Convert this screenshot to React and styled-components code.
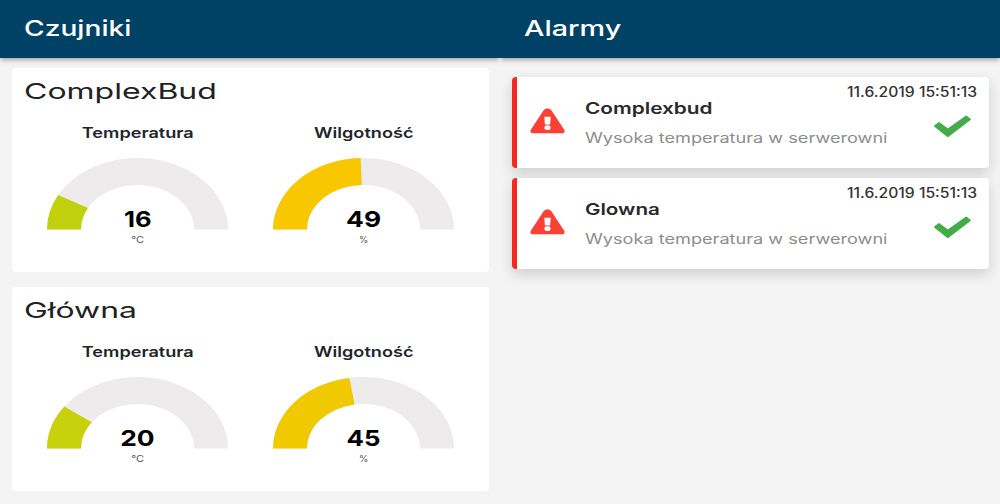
import React from "react";
import styled, { createGlobalStyle } from "styled-components";

const GlobalStyle = createGlobalStyle`
  *, *::before, *::after { box-sizing: border-box; }
  body { margin: 0; background: #f4f4f4; }
`;

const Page = styled.main`
  display: grid;
  grid-template-columns: 1fr 1fr;
  width: 1000px;
  height: 504px;
  overflow: hidden;
  background: #f4f4f4;
  font-family: Inter, "Open Sans", sans-serif;
`;

const Column = styled.section`
  display: flex;
  flex-direction: column;
  min-width: 0;
  overflow: hidden;
`;

const Header = styled.header`
  flex: none;
  height: 58px;
  padding: 14px 24px 0;
  background: #004266;
  color: #fff;
  box-shadow: 0 3px 4px -1px rgba(0, 0, 0, 0.25), 0 2px 8px rgba(0, 0, 0, 0.1);
`;

const Wide = styled.span`
  display: block;
  width: max-content;
  white-space: nowrap;
  transform: scaleX(${(p) => p.$stretch || 1});
  transform-origin: ${(p) => p.$origin || "left"} center;
`;

const HeaderTitle = styled.h1`
  margin: 0;
  font-size: 21.5px;
  line-height: 28px;
  font-weight: 500;
`;

const SensorList = styled.div`
  display: flex;
  flex-direction: column;
  gap: 15px;
  padding: 10px 11px 0 12px;
`;

const SensorCard = styled.article`
  height: 204px;
  padding: 9px 12px 0;
  border-radius: 4px;
  background: #fff;
`;

const SensorName = styled.h2`
  margin: 0;
  font-size: 22px;
  line-height: 28px;
  font-weight: 400;
  color: #222;
`;

const Meters = styled.div`
  display: grid;
  grid-template-columns: 226px 226px;
  margin-top: 18px;
`;

const Meter = styled.div`
  display: flex;
  flex-direction: column;
  align-items: center;
`;

const MeterLabel = styled.div`
  padding-left: 1.5px;
  font-size: 14.5px;
  line-height: 20px;
  font-weight: 600;
  color: #20252a;
`;

const Dial = styled.div`
  display: grid;
  width: 181px;
  height: 100px;
  margin-top: 15px;

  > * { grid-area: 1 / 1; }
`;

const Reading = styled.div`
  display: flex;
  flex-direction: column;
  align-items: center;
  padding: 47px 0 0 1.5px;
`;

const Value = styled.div`
  font-size: 22px;
  line-height: 28px;
  font-weight: 700;
  color: #000;
`;

const Unit = styled.div`
  margin-top: 1px;
  font-size: 9.5px;
  line-height: 12px;
  color: #555;
`;

const AlarmList = styled.div`
  display: flex;
  flex-direction: column;
  gap: 10px;
  padding: 19px 11px 0 12px;
`;

const AlarmCard = styled.article`
  display: grid;
  grid-template-columns: 55px 1fr auto;
  height: 91px;
  padding: 0 12px 0 18px;
  border-radius: 4px;
  background: linear-gradient(to right, #f4291f 5px, #fff 5px);
  box-shadow: 0 5px 14px rgba(0, 0, 0, 0.16);
`;

const WarningSvg = styled.svg`
  margin-top: 31px;
`;

const AlarmText = styled.div`
  padding-top: 20px;
`;

const AlarmTitle = styled.h3`
  margin: 0;
  font-size: 16px;
  line-height: 22px;
  font-weight: 600;
  color: #2a2a2a;
`;

const AlarmMessage = styled.p`
  margin: 9px 0 0;
  font-size: 14px;
  line-height: 20px;
  color: #8d8d8d;
`;

const AlarmSide = styled.div`
  display: flex;
  flex-direction: column;
  align-items: flex-end;
  padding-top: 5px;
`;

const AlarmTime = styled.time`
  font-size: 14px;
  line-height: 20px;
  font-weight: 500;
  color: #333;
`;

const CheckSvg = styled.svg`
  margin: 13px 6px 0 0;
`;

function WarningIcon() {
  return (
    <WarningSvg width="35" height="26" viewBox="0 0 35 26">
      <path
        d="M17.5 0.5C19.3 0.5 20.5 1.2 21.2 2.1L34.2 21.8C35.3 23.6 34.1 25.2 32 25.2H3C0.9 25.2 -0.3 23.6 0.8 21.8L13.8 2.1C14.5 1.2 15.7 0.5 17.5 0.5Z"
        fill="#f94135"
      />
      <path d="M14.3 8.8H20.7L20.1 16.6H14.9Z" fill="#fff" />
      <ellipse cx="17.5" cy="19.7" rx="3.1" ry="2.4" fill="#fff" />
    </WarningSvg>
  );
}

function CheckIcon() {
  return (
    <CheckSvg width="37" height="23" viewBox="0 0 37 23">
      <path
        d="M0.9 11L5 7.9L13.8 14.4L32.2 1.3L36.1 4.3L13.8 21.3Z"
        fill="#43ac48"
        stroke="#43ac48"
        strokeWidth="1.6"
        strokeLinejoin="round"
      />
    </CheckSvg>
  );
}

const CX = 90.5;
const CY = 71.5;

function arcPath(fraction) {
  const a = Math.PI * (1 - fraction);
  const c = Math.cos(a);
  const s = Math.sin(a);
  const [rx, ry, ix, iy] = [90.5, 71.5, 56.5, 44.5];
  return `M0 ${CY} A${rx} ${ry} 0 0 1 ${CX + rx * c} ${CY - ry * s} L${CX + ix * c} ${CY - iy * s} A${ix} ${iy} 0 0 0 ${CX - ix} ${CY} Z`;
}

function Gauge({ label, labelStretch, value, valueStretch, unit, color }) {
  return (
    <Meter>
      <MeterLabel><Wide $origin="center" $stretch={labelStretch}>{label}</Wide></MeterLabel>
      <Dial>
        <svg width="181" height="72" viewBox="0 0 181 72">
          <path d={arcPath(1)} fill="#edebec" />
          <path d={arcPath(value / 100)} fill={color} />
        </svg>
        <Reading>
          <Value><Wide $origin="center" $stretch={valueStretch}>{value}</Wide></Value>
          <Unit><Wide $origin="center" $stretch={unit === "%" ? 1 : 1.15}>{unit}</Wide></Unit>
        </Reading>
      </Dial>
    </Meter>
  );
}

const sensors = [
  { name: "ComplexBud", stretch: 1.455, temp: 16, tempStretch: 1.16, tempColor: "#c1d10e", hum: 49, humStretch: 1.2, humColor: "#f8c700" },
  { name: "Główna", stretch: 1.45, temp: 20, tempStretch: 1.2, tempColor: "#c9d10c", hum: 45, humStretch: 1.17, humColor: "#f0c900" },
];

const alarms = [
  { title: "Complexbud", stretch: 1.3 },
  { title: "Glowna", stretch: 1.29 },
];

export default function App() {
  return (
    <Page>
      <GlobalStyle />
      <Column>
        <Header><HeaderTitle><Wide $stretch={1.31}>Czujniki</Wide></HeaderTitle></Header>
        <SensorList>
          {sensors.map((s) => (
            <SensorCard key={s.name}>
              <SensorName><Wide $stretch={s.stretch}>{s.name}</Wide></SensorName>
              <Meters>
                <Gauge label="Temperatura" labelStretch={1.25} value={s.temp} valueStretch={s.tempStretch} unit="°C" color={s.tempColor} />
                <Gauge label="Wilgotność" labelStretch={1.25} value={s.hum} valueStretch={s.humStretch} unit="%" color={s.humColor} />
              </Meters>
            </SensorCard>
          ))}
        </SensorList>
      </Column>
      <Column>
        <Header><HeaderTitle><Wide $stretch={1.34}>Alarmy</Wide></HeaderTitle></Header>
        <AlarmList>
          {alarms.map((a) => (
            <AlarmCard key={a.title}>
              <WarningIcon />
              <AlarmText>
                <AlarmTitle><Wide $stretch={a.stretch}>{a.title}</Wide></AlarmTitle>
                <AlarmMessage><Wide $stretch={1.295}>Wysoka temperatura w serwerowni</Wide></AlarmMessage>
              </AlarmText>
              <AlarmSide>
                <AlarmTime><Wide $origin="right" $stretch={1.12}>11.6.2019 15:51:13</Wide></AlarmTime>
                <CheckIcon />
              </AlarmSide>
            </AlarmCard>
          ))}
        </AlarmList>
      </Column>
    </Page>
  );
}
